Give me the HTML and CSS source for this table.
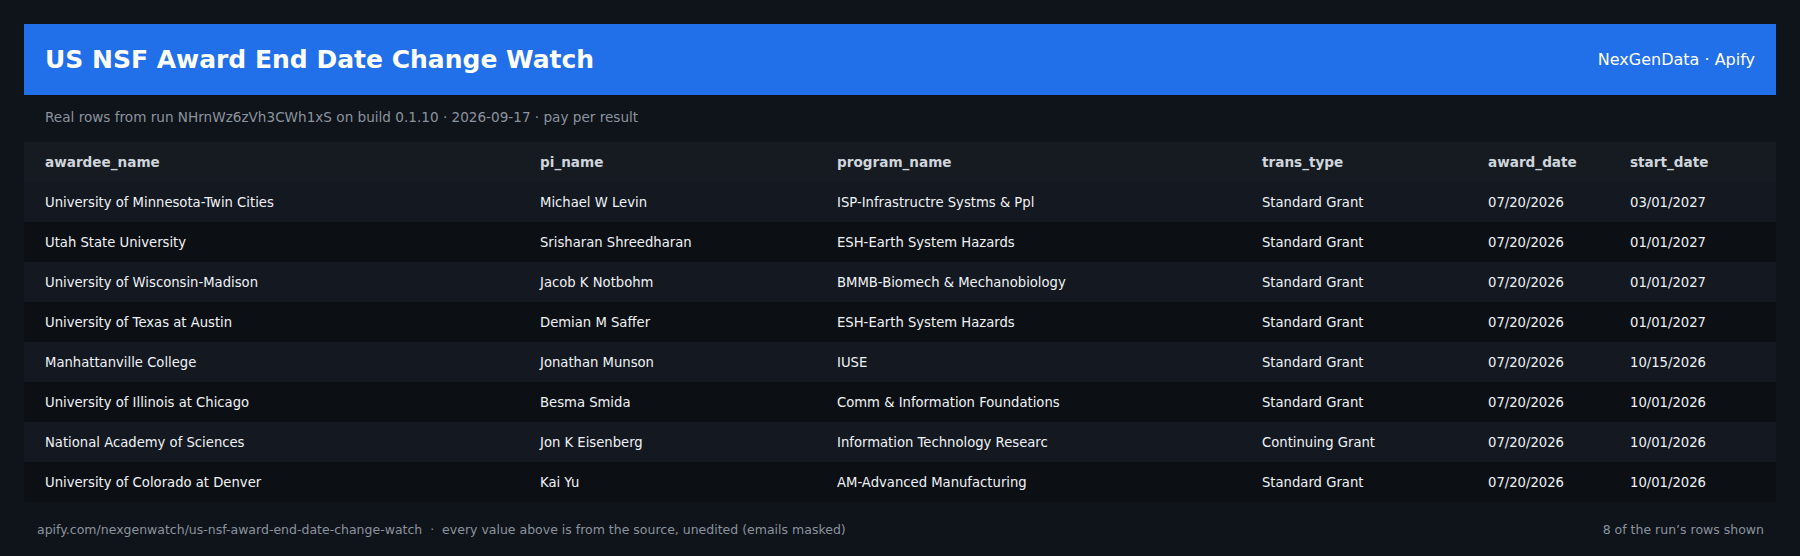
FILE: index.html
```html
<!DOCTYPE html>
<html>
<head>
<meta charset="utf-8">
<link rel="stylesheet" href="styles.css">
</head>
<body>
<div class="page">
  <header class="hero">
    <h1 class="title">US NSF Award End Date Change Watch</h1>
    <div class="brand">NexGenData · Apify</div>
  </header>
  <p class="sub">Real rows from run NHrnWz6zVh3CWh1xS on build 0.1.10 · 2026-09-17 · pay per result</p>
  <table class="data">
    <colgroup>
      <col class="c1"><col class="c2"><col class="c3"><col class="c4"><col class="c5"><col class="c6">
    </colgroup>
    <thead>
      <tr><th>awardee_name</th><th>pi_name</th><th>program_name</th><th>trans_type</th><th>award_date</th><th>start_date</th></tr>
    </thead>
    <tbody>
      <tr><td>University of Minnesota-Twin Cities</td><td>Michael W Levin</td><td>ISP-Infrastructre Systms &amp; Ppl</td><td>Standard Grant</td><td>07/20/2026</td><td>03/01/2027</td></tr>
      <tr><td>Utah State University</td><td>Srisharan Shreedharan</td><td>ESH-Earth System Hazards</td><td>Standard Grant</td><td>07/20/2026</td><td>01/01/2027</td></tr>
      <tr><td>University of Wisconsin-Madison</td><td>Jacob K Notbohm</td><td>BMMB-Biomech &amp; Mechanobiology</td><td>Standard Grant</td><td>07/20/2026</td><td>01/01/2027</td></tr>
      <tr><td>University of Texas at Austin</td><td>Demian M Saffer</td><td>ESH-Earth System Hazards</td><td>Standard Grant</td><td>07/20/2026</td><td>01/01/2027</td></tr>
      <tr><td>Manhattanville College</td><td>Jonathan Munson</td><td>IUSE</td><td>Standard Grant</td><td>07/20/2026</td><td>10/15/2026</td></tr>
      <tr><td>University of Illinois at Chicago</td><td>Besma Smida</td><td>Comm &amp; Information Foundations</td><td>Standard Grant</td><td>07/20/2026</td><td>10/01/2026</td></tr>
      <tr><td>National Academy of Sciences</td><td>Jon K Eisenberg</td><td>Information Technology Researc</td><td>Continuing Grant</td><td>07/20/2026</td><td>10/01/2026</td></tr>
      <tr><td>University of Colorado at Denver</td><td>Kai Yu</td><td>AM-Advanced Manufacturing</td><td>Standard Grant</td><td>07/20/2026</td><td>10/01/2026</td></tr>
    </tbody>
  </table>
  <footer class="foot">
    <span>apify.com/nexgenwatch/us-nsf-award-end-date-change-watch &nbsp;·&nbsp; every value above is from the source, unedited (emails masked)</span>
    <span>8 of the run’s rows shown</span>
  </footer>
</div>
</body>
</html>
```

FILE: styles.css
```css
html, body {
  margin: 0;
  padding: 0;
  background: #0f131a;
}
body {
  font-family: "DejaVu Sans", sans-serif;
  color: #e6edf3;
}
.page {
  padding: 24px 24px 0 24px;
}
.hero {
  background: #2170ea;
  height: 71px;
  display: flex;
  align-items: center;
  justify-content: space-between;
  padding: 0 21px;
  box-sizing: border-box;
}
.title {
  margin: 0;
  font-size: 25px;
  font-weight: bold;
  color: #ffffff;
}
.brand {
  font-size: 16px;
  color: #ffffff;
}
.sub {
  margin: 0;
  padding: 14px 21px 0 21px;
  height: 33px;
  font-size: 13.6px;
  color: #8b949e;
}
.data {
  width: 100%;
  border-collapse: collapse;
  table-layout: fixed;
  font-size: 13.2px;
}
.c1 { width: 495px; }
.c2 { width: 297px; }
.c3 { width: 425px; }
.c4 { width: 226px; }
.c5 { width: 142px; }
.data th, .data td {
  height: 40px;
  padding: 0 21px;
  text-align: left;
  white-space: nowrap;
  box-sizing: border-box;
}
.data th {
  background: #161b22;
  color: #d0d5dc;
  font-weight: bold;
  font-size: 13.6px;
}
.data tbody tr:nth-child(odd) td { background: #131821; }
.data tbody tr:nth-child(even) td { background: #0c1015; }
.data td { color: #f0f3f6; }
.foot {
  display: flex;
  justify-content: space-between;
  padding: 20px 12px 0 13px;
  font-size: 12.5px;
  color: #8b949e;
}
```
